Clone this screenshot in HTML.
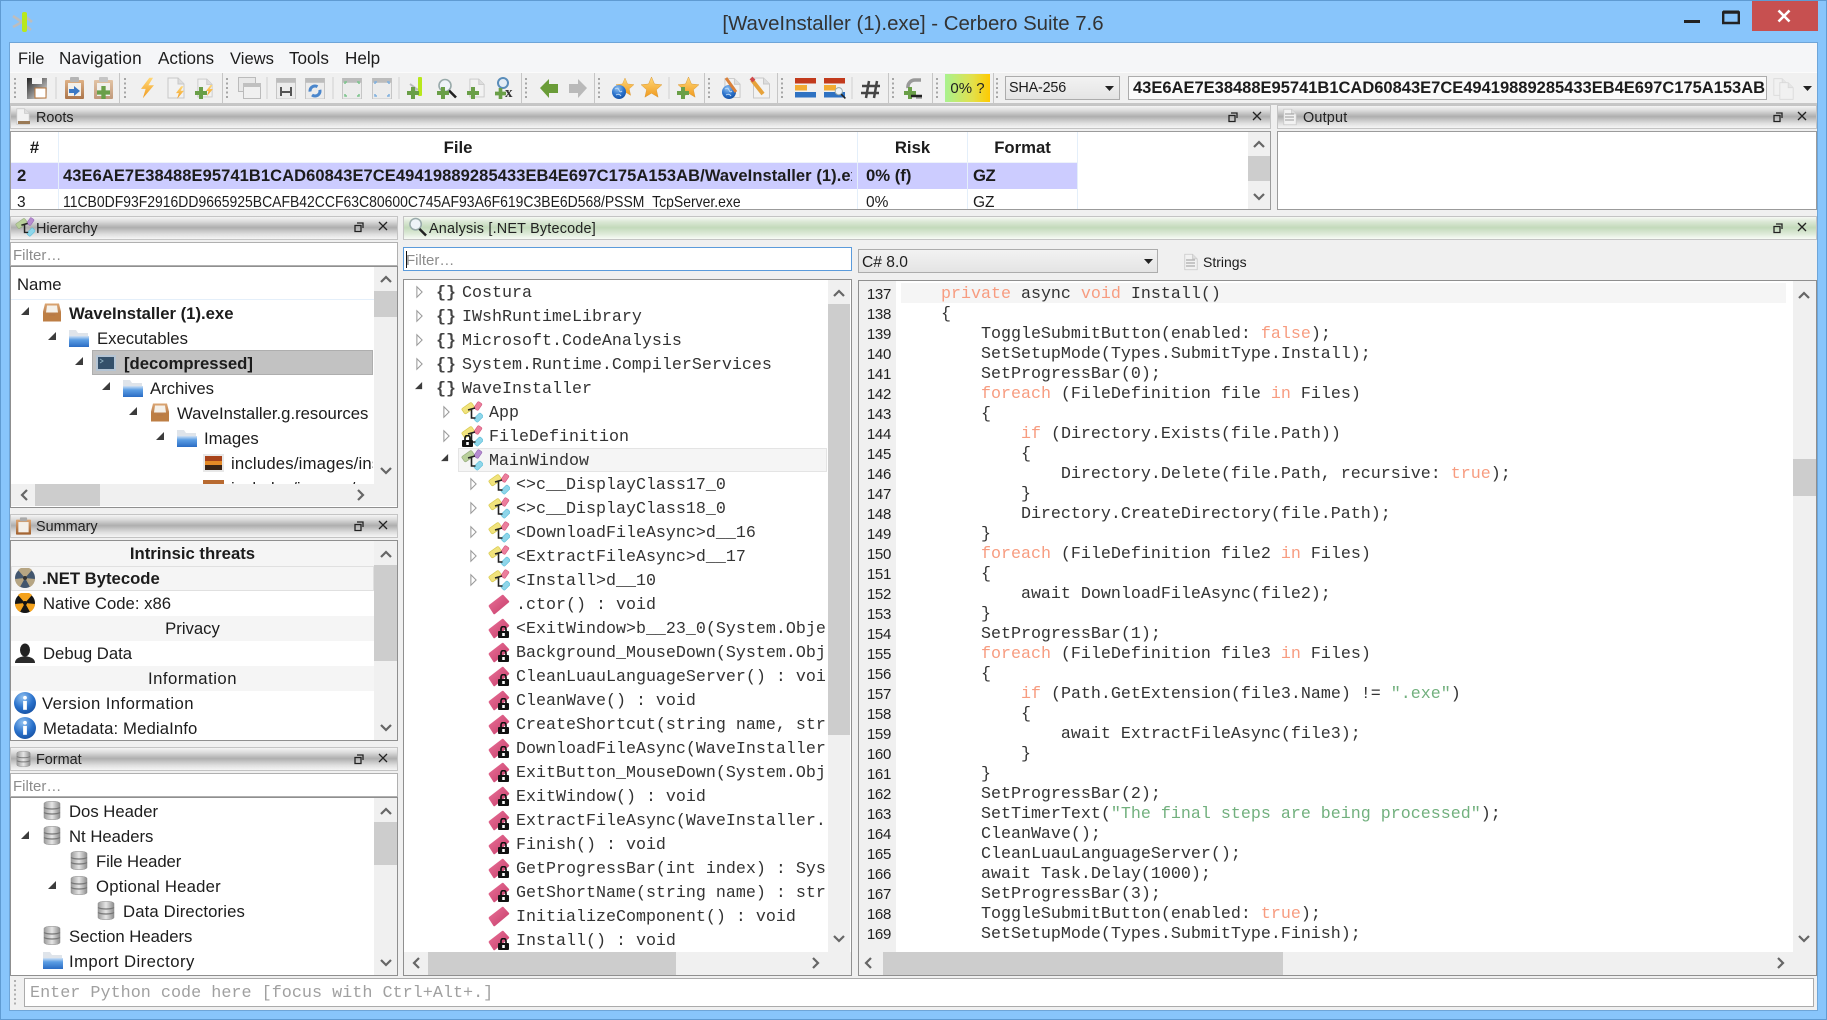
<!DOCTYPE html>
<html><head><meta charset="utf-8"><title>[WaveInstaller (1).exe] - Cerbero Suite 7.6</title>
<style>
html,body{margin:0;padding:0;background:#88c5fb}
#w{position:relative;width:1827px;height:1020px;overflow:hidden;background:#88c5fb;font-family:"Liberation Sans",sans-serif;font-size:16.7px;color:#1c1c1c;filter:blur(.3px)}
.a{position:absolute;box-sizing:border-box;white-space:nowrap}
.dk{position:absolute;box-sizing:border-box;height:24px;border:1px solid #c4c4c4;background:linear-gradient(#f4f4f4,#dcdcdc 20%,#aeaeae 48%,#dedede 78%,#f6f6f6);font-size:14.4px;line-height:24px;color:#222}
.gr{background:linear-gradient(#f6f9f4,#dbe8d5 22%,#c3dabb 48%,#dfebda 78%,#f8fbf6)}
.dk span{position:absolute;top:0}
.box{position:absolute;box-sizing:border-box;border:1px solid #9b9b9b;background:#fff}
.f{position:absolute;box-sizing:border-box;height:24px;border:1px solid #b0b0b0;background:#fff;color:#8c8c8c;font-size:15px;line-height:25px;padding-left:2px}
.sb{position:absolute;background:#f0f0f0}
.th{position:absolute;background:#cdcdcd}
.clip{position:absolute;overflow:hidden}
.r{height:25px;line-height:25px;white-space:nowrap}
.c{text-align:center;background:#f5f5f5}
.m{font-family:"Liberation Mono",monospace;font-size:16.67px;color:#333}
.m div{height:24px;line-height:24px;white-space:pre}
pre{margin:0;font:16.67px/20px "Liberation Mono",monospace;color:#333}
i{font-style:normal;color:#f79c80}
em{font-style:normal;color:#72b07e}
svg#o{position:absolute;left:0;top:0;pointer-events:none}
</style></head><body><div id="w">

<!-- window frame -->
<div class="a" style="left:0;top:0;width:1827px;height:1020px;border:1px solid #5f9bd2"></div>
<div class="a" style="left:9px;top:42px;width:1809px;height:969px;background:#f0f0f0;border:1px solid #6ea5d8"></div>
<div class="a" style="left:1752px;top:1px;width:66px;height:30px;background:#c75050"></div>
<div class="a" style="left:613px;top:8px;width:600px;height:32px;line-height:32px;text-align:center;font-size:20.4px;color:#333">[WaveInstaller (1).exe] - Cerbero Suite 7.6</div>

<!-- menu bar -->
<div class="a" style="left:10px;top:43px;width:1807px;height:29px;background:#f5f6f8"></div>
<span class="a" style="left:18px;top:47px;line-height:24px;font-size:16.4px">File</span>
<span class="a" style="left:59px;top:47px;line-height:24px;font-size:17.1px;letter-spacing:.2px">Navigation</span>
<span class="a" style="left:158px;top:47px;line-height:24px;font-size:17.1px">Actions</span>
<span class="a" style="left:230px;top:47px;line-height:24px;font-size:16.6px">Views</span>
<span class="a" style="left:289px;top:47px;line-height:24px;font-size:17.1px">Tools</span>
<span class="a" style="left:345px;top:47px;line-height:24px;font-size:17.1px">Help</span>

<!-- toolbar -->
<div class="a" style="left:10px;top:72px;width:1807px;height:33px;background:#f0f0f0;border-top:1px solid #fbfbfb;border-bottom:2px solid #c6c6c6"></div>
<div class="a" style="left:945px;top:74px;width:45px;height:28px;background:linear-gradient(90deg,#a9f28f,#e3e04a 62%,#ffca00);line-height:30px;text-align:center;font-size:15px;color:#222">0% ?</div>
<div class="a" style="left:1005px;top:76px;width:115px;height:24px;border:1px solid #acacac;background:linear-gradient(#f2f2f2,#e4e4e4);font-size:14.4px;line-height:23px;padding-left:3px;letter-spacing:-.2px">SHA-256</div>
<div class="a" style="left:1128px;top:76px;width:639px;height:24px;border:1px solid #acacac;background:#fafafa;font-size:16.5px;font-weight:bold;line-height:23px;padding-left:4px;overflow:hidden">43E6AE7E38488E95741B1CAD60843E7CE49419889285433EB4E697C175A153AB</div>

<!-- Roots -->
<div class="dk" style="left:10px;top:105px;width:1261px"><span style="left:25px">Roots</span></div>
<div class="box" style="left:10px;top:131px;width:1261px;height:79px;overflow:hidden">
 <div class="a" style="left:0;top:31px;width:1066px;height:26px;background:#ccccff"></div>
 <div class="a" style="left:47px;top:0;width:1px;height:78px;background:#e4effa"></div>
 <div class="a" style="left:846px;top:0;width:1px;height:78px;background:#e4effa"></div>
 <div class="a" style="left:956px;top:0;width:1px;height:78px;background:#e4effa"></div>
 <div class="a" style="left:1066px;top:0;width:1px;height:78px;background:#e4effa"></div>
 <div class="a" style="left:0;top:30px;width:1066px;height:1px;background:#eef3fa"></div>
 <b class="a" style="left:0;top:2px;width:47px;text-align:center;line-height:28px">#</b>
 <b class="a" style="left:48px;top:2px;width:798px;text-align:center;line-height:28px">File</b>
 <b class="a" style="left:847px;top:2px;width:109px;text-align:center;line-height:28px">Risk</b>
 <b class="a" style="left:957px;top:2px;width:109px;text-align:center;line-height:28px">Format</b>
 <b class="a" style="left:6px;top:31px;line-height:26px">2</b>
 <div class="a" style="left:52px;top:31px;width:789px;height:26px;overflow:hidden;line-height:26px;font-size:16.5px;font-weight:bold;letter-spacing:.08px">43E6AE7E38488E95741B1CAD60843E7CE49419889285433EB4E697C175A153AB/WaveInstaller (1).exe</div>
 <b class="a" style="left:855px;top:31px;line-height:26px">0% (f)</b>
 <b class="a" style="left:962px;top:31px;line-height:26px;letter-spacing:-.5px">GZ</b>
 <span class="a" style="left:6px;top:59px;line-height:24px;font-size:15.5px">3</span>
 <span class="a" style="left:52px;top:59px;line-height:24px;font-size:16px;transform:scaleX(.872);transform-origin:0 0">11CB0DF93F2916DD9665925BCAFB42CCF63C80600C745AF93A6F619C3BE6D568/PSSM_TcpServer.exe</span>
 <span class="a" style="left:855px;top:59px;line-height:24px;font-size:15.5px">0%</span>
 <span class="a" style="left:962px;top:59px;line-height:24px;font-size:15.5px">GZ</span>
 <div class="sb" style="left:1237px;top:0;width:22px;height:77px"></div>
 <div class="th" style="left:1237px;top:24px;width:22px;height:25px"></div>
</div>

<!-- Output -->
<div class="dk" style="left:1277px;top:105px;width:540px"><span style="left:25px;letter-spacing:.2px">Output</span></div>
<div class="box" style="left:1277px;top:131px;width:540px;height:79px"></div>

<!-- Hierarchy -->
<div class="dk" style="left:10px;top:216px;width:388px"><span style="left:25px">Hierarchy</span></div>
<div class="f" style="left:10px;top:242px;width:388px">Filter…</div>
<div class="box" style="left:10px;top:266px;width:388px;height:242px;border-color:#8f8f8f"></div>
<span class="a" style="left:17px;top:268px;line-height:33px">Name</span>
<div class="a" style="left:11px;top:299px;width:363px;height:1px;background:#e4effa"></div>
<div class="a" style="left:92px;top:350px;width:281px;height:25px;background:#c2c2c2;border:1px solid #aeaeae"></div>
<div class="clip" style="left:11px;top:301px;width:362px;height:183px">
 <div class="r" style="padding-left:58px;font-weight:bold">WaveInstaller (1).exe</div>
 <div class="r" style="padding-left:86px">Executables</div>
 <div class="r" style="padding-left:113px;font-weight:bold">[decompressed]</div>
 <div class="r" style="padding-left:139px">Archives</div>
 <div class="r" style="padding-left:166px">WaveInstaller.g.resources</div>
 <div class="r" style="padding-left:193px">Images</div>
 <div class="r" style="padding-left:220px;letter-spacing:.2px">includes/images/installer.png</div>
 <div class="r" style="padding-left:220px">includes/images/mountain.png</div>
</div>
<div class="sb" style="left:374px;top:267px;width:23px;height:217px"></div>
<div class="th" style="left:374px;top:291px;width:23px;height:26px"></div>
<div class="sb" style="left:11px;top:484px;width:386px;height:22px"></div>
<div class="th" style="left:35px;top:484px;width:65px;height:22px"></div>

<!-- Summary -->
<div class="dk" style="left:10px;top:514px;width:388px"><span style="left:25px">Summary</span></div>
<div class="box" style="left:10px;top:540px;width:388px;height:201px;border-color:#8f8f8f"></div>
<div class="clip" style="left:11px;top:541px;width:363px;height:199px">
 <div class="r c"><b>Intrinsic threats</b></div>
 <div class="r" style="padding-left:31px;font-weight:bold;background:#f5f5f5;box-shadow:inset 0 0 0 1px #e0e0e0">.NET Bytecode</div>
 <div class="r" style="padding-left:32px">Native Code: x86</div>
 <div class="r c">Privacy</div>
 <div class="r" style="padding-left:32px;line-height:26px">Debug Data</div>
 <div class="r c" style="letter-spacing:.5px">Information</div>
 <div class="r" style="padding-left:31px;letter-spacing:.43px">Version Information</div>
 <div class="r" style="padding-left:32px;letter-spacing:.12px;line-height:26px">Metadata: MediaInfo</div>
</div>
<div class="sb" style="left:374px;top:541px;width:23px;height:199px"></div>
<div class="th" style="left:374px;top:565px;width:23px;height:96px"></div>

<!-- Format -->
<div class="dk" style="left:10px;top:747px;width:388px"><span style="left:25px">Format</span></div>
<div class="f" style="left:10px;top:773px;width:388px">Filter…</div>
<div class="box" style="left:10px;top:797px;width:388px;height:179px;border-color:#8f8f8f"></div>
<div class="clip" style="left:11px;top:799px;width:363px;height:176px">
 <div class="r" style="padding-left:58px">Dos Header</div>
 <div class="r" style="padding-left:58px">Nt Headers</div>
 <div class="r" style="padding-left:85px;letter-spacing:-.1px">File Header</div>
 <div class="r" style="padding-left:85px;letter-spacing:.23px">Optional Header</div>
 <div class="r" style="padding-left:112px;letter-spacing:.15px">Data Directories</div>
 <div class="r" style="padding-left:58px">Section Headers</div>
 <div class="r" style="padding-left:58px;letter-spacing:.44px">Import Directory</div>
</div>
<div class="sb" style="left:374px;top:798px;width:23px;height:177px"></div>
<div class="th" style="left:374px;top:822px;width:23px;height:43px"></div>

<!-- Analysis -->
<div class="dk gr" style="left:403px;top:216px;width:1414px"><span style="left:25px;letter-spacing:.2px">Analysis [.NET Bytecode]</span></div>
<div class="f" style="left:403px;top:247px;width:449px;border-color:#5b9bdb">Filter…</div>
<div class="a" style="left:406px;top:251px;width:1px;height:17px;background:#111"></div>
<div class="a" style="left:858px;top:249px;width:300px;height:24px;border:1px solid #acacac;background:linear-gradient(#f2f2f2,#e4e4e4);font-size:15.6px;line-height:25px;padding-left:3px">C# 8.0</div>
<span class="a" style="left:1203px;top:250px;line-height:24px;font-size:14px">Strings</span>

<!-- namespace tree -->
<div class="box" style="left:403px;top:279px;width:449px;height:697px;border-color:#8f8f8f"></div>
<div class="a" style="left:458px;top:448px;width:369px;height:24px;background:#f5f5f5;border:1px solid #e4e4e4"></div>
<div class="clip m" style="left:404px;top:282px;width:422px;height:670px;color:#444">
 <div style="padding-left:32px"><b>{}</b></div><div style="padding-left:32px"><b>{}</b></div><div style="padding-left:32px"><b>{}</b></div><div style="padding-left:32px"><b>{}</b></div><div style="padding-left:32px"><b>{}</b></div>
</div>
<div class="clip m" style="left:404px;top:282px;width:422px;height:670px">
 <div style="padding-left:58px">Costura</div>
 <div style="padding-left:58px">IWshRuntimeLibrary</div>
 <div style="padding-left:58px">Microsoft.CodeAnalysis</div>
 <div style="padding-left:58px">System.Runtime.CompilerServices</div>
 <div style="padding-left:58px">WaveInstaller</div>
 <div style="padding-left:85px">App</div>
 <div style="padding-left:85px">FileDefinition</div>
 <div style="padding-left:85px">MainWindow</div>
 <div style="padding-left:112px">&lt;&gt;c__DisplayClass17_0</div>
 <div style="padding-left:112px">&lt;&gt;c__DisplayClass18_0</div>
 <div style="padding-left:112px">&lt;DownloadFileAsync&gt;d__16</div>
 <div style="padding-left:112px">&lt;ExtractFileAsync&gt;d__17</div>
 <div style="padding-left:112px">&lt;Install&gt;d__10</div>
 <div style="padding-left:112px">.ctor() : void</div>
 <div style="padding-left:112px">&lt;ExitWindow&gt;b__23_0(System.Object sender)</div>
 <div style="padding-left:112px">Background_MouseDown(System.Object sender)</div>
 <div style="padding-left:112px">CleanLuauLanguageServer() : void</div>
 <div style="padding-left:112px">CleanWave() : void</div>
 <div style="padding-left:112px">CreateShortcut(string name, string path)</div>
 <div style="padding-left:112px">DownloadFileAsync(WaveInstaller.FileDefinition)</div>
 <div style="padding-left:112px">ExitButton_MouseDown(System.Object sender)</div>
 <div style="padding-left:112px">ExitWindow() : void</div>
 <div style="padding-left:112px">ExtractFileAsync(WaveInstaller.FileDefinition)</div>
 <div style="padding-left:112px">Finish() : void</div>
 <div style="padding-left:112px">GetProgressBar(int index) : System</div>
 <div style="padding-left:112px">GetShortName(string name) : string</div>
 <div style="padding-left:112px">InitializeComponent() : void</div>
 <div style="padding-left:112px">Install() : void</div>
</div>
<div class="sb" style="left:828px;top:280px;width:22px;height:672px"></div>
<div class="th" style="left:828px;top:304px;width:22px;height:431px"></div>
<div class="sb" style="left:404px;top:952px;width:447px;height:23px"></div>
<div class="th" style="left:428px;top:952px;width:248px;height:23px"></div>

<!-- code -->
<div class="box" style="left:858px;top:280px;width:959px;height:696px;border-color:#8f8f8f"></div>
<div class="a" style="left:859px;top:281px;width:37px;height:671px;background:#f0f0f0"></div>
<div class="a" style="left:901px;top:283px;width:885px;height:20px;background:#f5f5f5"></div>
<div class="clip" style="left:859px;top:285px;width:32px;height:667px;text-align:right;font-size:15px;line-height:20px;letter-spacing:-.3px;color:#222">137<br>138<br>139<br>140<br>141<br>142<br>143<br>144<br>145<br>146<br>147<br>148<br>149<br>150<br>151<br>152<br>153<br>154<br>155<br>156<br>157<br>158<br>159<br>160<br>161<br>162<br>163<br>164<br>165<br>166<br>167<br>168<br>169</div>
<div class="clip" style="left:901px;top:285px;width:890px;height:667px"><pre>    <i>private</i> async <i>void</i> Install()
    {
        ToggleSubmitButton(enabled: <i>false</i>);
        SetSetupMode(Types.SubmitType.Install);
        SetProgressBar(0);
        <i>foreach</i> (FileDefinition file <i>in</i> Files)
        {
            <i>if</i> (Directory.Exists(file.Path))
            {
                Directory.Delete(file.Path, recursive: <i>true</i>);
            }
            Directory.CreateDirectory(file.Path);
        }
        <i>foreach</i> (FileDefinition file2 <i>in</i> Files)
        {
            await DownloadFileAsync(file2);
        }
        SetProgressBar(1);
        <i>foreach</i> (FileDefinition file3 <i>in</i> Files)
        {
            <i>if</i> (Path.GetExtension(file3.Name) != <em>".exe"</em>)
            {
                await ExtractFileAsync(file3);
            }
        }
        SetProgressBar(2);
        SetTimerText(<em>"The final steps are being processed"</em>);
        CleanWave();
        CleanLuauLanguageServer();
        await Task.Delay(1000);
        SetProgressBar(3);
        ToggleSubmitButton(enabled: <i>true</i>);
        SetSetupMode(Types.SubmitType.Finish);</pre></div>
<div class="sb" style="left:1793px;top:281px;width:23px;height:671px"></div>
<div class="th" style="left:1793px;top:459px;width:23px;height:37px"></div>
<div class="sb" style="left:859px;top:952px;width:957px;height:23px"></div>
<div class="th" style="left:883px;top:952px;width:400px;height:23px"></div>

<!-- python input -->
<div class="a" style="left:24px;top:978px;width:1790px;height:29px;border:1px solid #ababab;background:#fff;font:16.8px/29px 'Liberation Mono',monospace;color:#a0a0a0;padding-left:5px">Enter Python code here [focus with Ctrl+Alt+.]</div>

<svg id="o" width="1827" height="1020" viewBox="0 0 1827 1020" xmlns="http://www.w3.org/2000/svg">
<defs>
<linearGradient id="gb" x1="0" y1="0" x2="0" y2="1"><stop offset="0" stop-color="#cfe0f4"/><stop offset=".35" stop-color="#5d9fe4"/><stop offset="1" stop-color="#2a6cc4"/></linearGradient>
<linearGradient id="go" x1="0" y1="0" x2="0" y2="1"><stop offset="0" stop-color="#dca673"/><stop offset="1" stop-color="#a0602e"/></linearGradient>
<linearGradient id="gp" x1="0" y1="0" x2="1" y2="1"><stop offset="0" stop-color="#ea7298"/><stop offset="1" stop-color="#c53c6a"/></linearGradient>
<linearGradient id="gd" x1="0" y1="0" x2="1" y2="0"><stop offset="0" stop-color="#9a9a9a"/><stop offset=".5" stop-color="#e6e6e6"/><stop offset="1" stop-color="#8c8c8c"/></linearGradient>
<linearGradient id="gs" x1="0" y1="0" x2="0" y2="1"><stop offset="0" stop-color="#ffd877"/><stop offset="1" stop-color="#f09a1e"/></linearGradient>
<radialGradient id="gi" cx=".4" cy=".25" r=".85"><stop offset="0" stop-color="#8fc0f0"/><stop offset=".55" stop-color="#2a72cc"/><stop offset="1" stop-color="#124a9a"/></radialGradient>
<linearGradient id="gf" x1="0" y1="0" x2="1" y2="1"><stop offset="0" stop-color="#222"/><stop offset="1" stop-color="#f0f0f0"/></linearGradient>

<symbol id="tf" viewBox="0 0 9 9"><path d="M8 0V8H0Z" fill="#3c3c3c"/></symbol>
<symbol id="to" viewBox="0 0 8 14"><path d="M1 1L7 7L1 13Z" fill="#fff" stroke="#9a9a9a" stroke-width="1.2"/></symbol>
<symbol id="tray" viewBox="0 0 20 20"><path d="M3 1h14l2 8v10H1V9z" fill="url(#go)"/><path d="M5 3h10l1 7H4z" fill="#f5f1ea"/><path d="M1 10h5l1 3h6l1-3h5v9H1z" fill="#bd7e44"/></symbol>
<symbol id="fold" viewBox="0 0 21 20"><path d="M1 2h7l2 3h10v14H1z" fill="#dfe4ea"/><path d="M1 8h20v11H1z" fill="url(#gb)"/></symbol>
<symbol id="term" viewBox="0 0 20 20"><rect x="0" y="2" width="20" height="16" fill="#b4c4d4"/><rect x="2" y="4" width="16" height="12" fill="#34506a"/><path d="M4 6l3 2-3 2" stroke="#8ab" fill="none"/></symbol>
<symbol id="img" viewBox="0 0 21 20"><rect y="1" width="21" height="18" fill="#e8e8e8"/><rect x="2" y="3" width="17" height="14" fill="#e58a26"/><rect x="2" y="3" width="17" height="5" fill="#a8431a"/><rect x="2" y="12" width="17" height="5" fill="#3a2416"/></symbol>
<symbol id="db" viewBox="0 0 18 20"><path d="M1 3c0-3 16-3 16 0v14c0 3-16 3-16 0z" fill="url(#gd)" stroke="#8c8c8c" stroke-width=".5"/><path d="M1 7c3 2 13 2 16 0M1 12c3 2 13 2 16 0" fill="none" stroke="#777" stroke-width="1.2"/></symbol>
<symbol id="nuke" viewBox="0 0 20 20"><circle cx="10" cy="10" r="10" fill="#161616"/><path d="M10 10L3 2a10 10 0 0 1 14 0zM10 10L0 11a10 10 0 0 0 5 8zM10 10L20 11a10 10 0 0 1-5 8z" fill="#f4a21c"/><circle cx="10" cy="10" r="2" fill="#111"/></symbol>
<symbol id="nukg" viewBox="0 0 20 20"><circle cx="10" cy="10" r="10" fill="#42566e"/><path d="M10 10L3 2a10 10 0 0 1 14 0zM10 10L0 11a10 10 0 0 0 5 8zM10 10L20 11a10 10 0 0 1-5 8z" fill="#b6a583"/><circle cx="10" cy="10" r="2" fill="#333"/></symbol>
<symbol id="user" viewBox="0 0 22 20"><ellipse cx="11" cy="7" rx="5" ry="6.5" fill="#222"/><path d="M1 20c0-5 5-6 10-7 5 1 10 2 10 7z" fill="#2a2a2a"/></symbol>
<symbol id="info" viewBox="0 0 21 21"><circle cx="10.5" cy="10.5" r="10.5" fill="url(#gi)"/><circle cx="10.5" cy="5.5" r="1.8" fill="#fff"/><rect x="8.7" y="8.5" width="3.6" height="8.5" fill="#fff"/></symbol>
<symbol id="lock" viewBox="0 0 11 12"><path d="M3 5V3a2.5 2.5 0 0 1 5 0v2" fill="none" stroke="#111" stroke-width="1.7"/><rect y="5" width="11" height="7" rx="1" fill="#111"/><rect x="4.2" y="7" width="2.6" height="3" fill="#fff"/></symbol>
<symbol id="cls" viewBox="0 0 22 22"><rect x="1" y="4" width="12" height="6.5" rx="1.5" transform="rotate(-35 7 7)" fill="#f1e37c" stroke="#d8c94f" stroke-width=".7" /><rect x="13" y="2.5" width="8" height="5" rx="1.3" transform="rotate(-55 17 5)" fill="#ec7f9d" stroke="#d4577c" stroke-width=".6"/><rect x="13" y="14" width="9" height="5.2" rx="1.3" transform="rotate(-45 17.5 16.5)" fill="#8ed6ea" stroke="#58bdd8" stroke-width=".6"/><path d="M7 9l7-2M10.5 8v9h4" stroke="#222" stroke-width="1.6" fill="none"/></symbol>
<symbol id="clm" viewBox="0 0 22 22"><rect x="1" y="4" width="12" height="6.5" rx="1.5" transform="rotate(-35 7 7)" fill="#b8cf9a" stroke="#98ad80" stroke-width=".7" /><rect x="13" y="2.5" width="8" height="5" rx="1.3" transform="rotate(-55 17 5)" fill="#b68cd0" stroke="#9366b5" stroke-width=".6"/><rect x="13" y="14" width="9" height="5.2" rx="1.3" transform="rotate(-45 17.5 16.5)" fill="#8ed6ea" stroke="#58bdd8" stroke-width=".6"/><path d="M7 9l7-2M10.5 8v9h4" stroke="#222" stroke-width="1.6" fill="none"/></symbol>
<symbol id="meth" viewBox="0 0 22 21"><path d="M1 11L14 1q1-.6 1.7.3L21 7q.5.8-.3 1.5L7 20q-.8.6-1.5 0L1 13q-.8-1 0-2z" fill="url(#gp)"/></symbol>
<symbol id="ml" viewBox="0 0 22 21"><use href="#meth" width="22" height="21"/><use href="#lock" x="10" y="8" width="11" height="12"/></symbol>
<symbol id="plus" viewBox="0 0 12 12"><path d="M4 0h4v4h4v4H8v4H4V8H0V4h4z" fill="#6a9f48"/></symbol>
<symbol id="doc" viewBox="0 0 18 22"><path d="M1 1h10l6 6v14H1z" fill="#f2f2f2" stroke="#c8c8c8"/><path d="M11 1v6h6" fill="#ddd" stroke="#c8c8c8"/></symbol>
<symbol id="bolt" viewBox="0 0 14 22"><path d="M9 0L0 12h5L2 22 14 8H8L13 0z" fill="url(#gs)"/></symbol>
<symbol id="clip" viewBox="0 0 19 22"><rect y="3" width="19" height="19" rx="1" fill="url(#go)"/><rect x="3" y="6" width="13" height="13" fill="#f4f0ea"/><rect x="5" y="0" width="9" height="5" rx="1" fill="#aaa"/></symbol>
<symbol id="star" viewBox="0 0 21 21"><path d="M10.5 0l3 7 7.5.7-5.6 5 1.7 7.5-6.6-4-6.600 4 1.700-7.500L0 7.700 7.500 7z" fill="url(#gs)" stroke="#d99a3a" stroke-width=".5"/></symbol>
<symbol id="globe" viewBox="0 0 14 14"><circle cx="7" cy="7" r="7" fill="url(#gi)"/><path d="M3 4q3-2 4 1t3 1M4 10q3-2 5 1" stroke="#bcd9f5" fill="none"/></symbol>
<symbol id="mag" viewBox="0 0 20 20"><circle cx="8" cy="7" r="6" fill="#eef3f8" stroke="#9aa" stroke-width="1.6"/><path d="M12 12l7 7" stroke="#222" stroke-width="2.6"/></symbol>
<symbol id="bars" viewBox="0 0 21 20"><rect width="21" height="5.500" fill="#c23a1c"/><rect y="7" width="12" height="5.500" fill="#f2ab33"/><rect y="14" width="21" height="5.500" fill="#2f72c2"/></symbol>
<symbol id="win" viewBox="0 0 20 22"><rect width="20" height="22" fill="#ececec" stroke="#c4c4c4"/><rect width="20" height="5" fill="#bcbcbc"/></symbol>
</defs>

<!-- app icon -->
<path d="M13 16l9 6M13 27l9-5M26 17l6 5M26 26l5 4" stroke="#bdbdbd" stroke-width="2.600" fill="none"/>
<rect x="22" y="12" width="5" height="20" rx="2" fill="#b8e81c"/>
<!-- window buttons -->
<rect x="1684" y="20" width="16" height="3" fill="#222"/>
<path d="M1723.200 12.500H1738.800V23H1723.200Z" fill="none" stroke="#222" stroke-width="2.400"/>
<path d="M1723 12h16" stroke="#222" stroke-width="3"/>
<path d="M1778.500 10.500l11 11M1789.500 10.500l-11 11" stroke="#fff" stroke-width="2.600"/>

<!-- toolbar grips and separators -->
<path d="M15 78V99M125 78V99M227 78V99M526 78V99M599 78V99M709 78V99M782 78V99M893 78V99M937 78V99M997 78V99" stroke="#a6a6a6" stroke-width="2" stroke-dasharray="2 2.500"/>
<path d="M56 77V99M267 77V99M333 77V99M399 77V99M669 77V99M852 77V99" stroke="#cfcfcf"/>
<path d="M119.500 73V104M222.500 73V104M521.500 73V104M594.500 73V104M704.500 73V104M777.500 73V104M888.500 73V104M932.500 73V104M993.500 73V104" stroke="#c6c6c6"/>

<!-- toolbar icons -->
<rect x="27" y="78" width="20" height="21" fill="url(#gf)"/><rect x="32" y="78" width="10" height="6" fill="#f5f5f5"/><rect x="35" y="88" width="11" height="10" fill="#fff" stroke="#b8763a"/>
<g opacity=".85"><use href="#clip" x="65" y="77" width="19" height="22"/></g><path d="M69 89h5v-3l6 5-6 5v-3h-5z" fill="#3b78c4"/>
<g opacity=".6"><use href="#clip" x="94" y="77" width="19" height="22"/></g><use href="#plus" x="97" y="86" width="13" height="13"/>
<use href="#bolt" x="141" y="77" width="13" height="22"/>
<use href="#doc" x="167" y="77" width="18" height="22"/><use href="#bolt" x="176" y="86" width="8" height="13"/>
<use href="#doc" x="197" y="77" width="16" height="22"/><use href="#plus" x="195" y="87" width="12" height="12"/><use href="#bolt" x="206" y="85" width="7" height="11"/>
<rect x="238.500" y="77.500" width="17" height="14" fill="#e8e8e8" stroke="#bbb"/><rect x="243.500" y="83.500" width="17" height="15" fill="#f0f0f0" stroke="#bbb"/><rect x="243" y="83" width="18" height="4" fill="#c0c0c0"/>
<use href="#win" x="276" y="78" width="20" height="21"/><path d="M281 96V87M291 96V87M281 92h10" stroke="#555" stroke-width="2" fill="none"/>
<use href="#win" x="305" y="78" width="20" height="21"/><circle cx="315" cy="91" r="5" fill="none" stroke="#4a86cc" stroke-width="3" stroke-dasharray="11 4"/>
<use href="#win" x="342" y="78" width="20" height="21"/><path d="M345 84v-2h2M359 84v-2h-2M345 94v2h2M359 94v2h-2" stroke="#7cc48c" stroke-width="1.500" fill="none"/>
<use href="#win" x="372" y="78" width="20" height="21"/><path d="M375 84v-2h2M389 84v-2h-2M375 94v2h2M389 94v2h-2" stroke="#7fb0de" stroke-width="1.500" fill="none"/>
<path d="M410 84l8 6M410 92l8-3" stroke="#bbb" stroke-width="2" fill="none"/><rect x="418" y="77" width="4" height="19" rx="1" fill="#b8e81c"/><use href="#plus" x="407" y="87" width="12" height="12"/>
<use href="#mag" x="437" y="78" width="20" height="21"/><use href="#plus" x="437" y="87" width="12" height="12"/>
<use href="#doc" x="469" y="77" width="16" height="22"/><use href="#plus" x="467" y="87" width="12" height="12"/>
<circle cx="503" cy="83" r="5" fill="#e4edf5" stroke="#5a8dba" stroke-width="2"/><use href="#plus" x="495" y="88" width="11" height="11"/>
<text x="505" y="97" font-family="Liberation Serif,serif" font-weight="bold" font-size="15" fill="#333">x</text>
<path d="M540 88l9-9v5h9v9h-9v5z" fill="#6a9c38"/><path d="M587 88l-9-9v5h-9v9h9v5z" fill="#b9b9b9"/>
<use href="#star" x="616" y="77" width="18" height="20"/><use href="#globe" x="612" y="85" width="14" height="14"/>
<use href="#star" x="641" y="77" width="21" height="21"/>
<use href="#star" x="678" y="77" width="21" height="21"/><use href="#plus" x="677" y="87" width="12" height="12"/>
<use href="#doc" x="724" y="77" width="17" height="22"/><use href="#globe" x="722" y="85" width="14" height="14"/><path d="M726 78l10 14" stroke="#d9813a" stroke-width="3"/>
<use href="#doc" x="752" y="77" width="19" height="22"/><path d="M752 80l11 14" stroke="#e6a23a" stroke-width="4"/><path d="M751 78l3 3" stroke="#d04a4a" stroke-width="4"/>
<use href="#bars" x="795" y="78" width="21" height="20"/>
<use href="#bars" x="824" y="78" width="21" height="20"/><use href="#mag" x="834" y="87" width="12" height="12"/>
<path d="M869 81l-3 17M877 81l-3 17M862 86h18M861 93h18" stroke="#444" stroke-width="2.500" fill="none"/>
<path d="M921 80h-6a7 7 0 0 0-7 8M922 97h-6" stroke="#999" stroke-width="3.500" fill="none"/><use href="#plus" x="904" y="87" width="12" height="12"/><path d="M911 96h11" stroke="#222" stroke-width="2.500"/>
<g opacity=".55"><use href="#doc" x="1773" y="77" width="15" height="20"/><use href="#doc" x="1779" y="81" width="15" height="20"/></g>
<path d="M1803 86h9l-4.500 5z" fill="#222"/>
<path d="M1105 86h9l-4.500 5z" fill="#222"/>
<path d="M1144 259h9l-4.500 5z" fill="#222"/>

<!-- dock title icons -->
<use href="#doc" x="16" y="108" width="14" height="17"/><rect x="18" y="121" width="12" height="3" fill="#9a7a56"/>
<use href="#doc" x="1283" y="108" width="14" height="18"/><path d="M1285 114h9M1285 117h9M1285 120h9" stroke="#999"/>
<use href="#clm" x="15" y="217" width="20" height="20"/>
<use href="#mag" x="408" y="217" width="19" height="20"/>
<use href="#clip" x="16" y="517" width="15" height="18"/>
<use href="#db" x="16" y="750" width="15" height="18"/>
<use href="#doc" x="1184" y="253" width="14" height="18"/><path d="M1186 260h9M1186 263h9M1186 266h9" stroke="#999"/>

<!-- dock float/close -->
<g fill="none" stroke="#222" stroke-width="1.300">
<path d="M1231 113h6v5M1229 115.500h6v6h-6z"/><path d="M1253 112l8 8M1261 112l-8 8"/>
<path d="M1776 113h6v5M1774 115.500h6v6h-6z"/><path d="M1798 112l8 8M1806 112l-8 8"/>
<path d="M1776 224h6v5M1774 226.500h6v6h-6z"/><path d="M1798 223l8 8M1806 223l-8 8"/>
<path d="M357 223h6v5M355 225.500h6v6h-6z"/><path d="M379 222l8 8M387 222l-8 8"/>
<path d="M357 522h6v5M355 524.500h6v6h-6z"/><path d="M379 521l8 8M387 521l-8 8"/>
<path d="M357 755h6v5M355 757.500h6v6h-6z"/><path d="M379 754l8 8M387 754l-8 8"/>
</g>

<!-- scroll arrows -->
<g fill="none" stroke="#666" stroke-width="2.200">
<path d="M1254 147l5-5 5 5M1254 194l5 5 5-5"/>
<path d="M381 282l5-5 5 5M381 468l5 5 5-5M27 490l-5 5 5 5M358 490l5 5-5 5"/>
<path d="M381 557l5-5 5 5M381 725l5 5 5-5"/>
<path d="M381 814l5-5 5 5M381 960l5 5 5-5"/>
<path d="M834 296l5-5 5 5M834 936l5 5 5-5M419 958l-5 5 5 5M813 958l5 5-5 5"/>
<path d="M1799 298l5-5 5 5M1799 936l5 5 5-5M871 958l-5 5 5 5M1778 958l5 5-5 5"/>
</g>

<!-- hierarchy icons -->
<use href="#tf" x="21" y="307" width="9" height="9"/><use href="#tf" x="48" y="332" width="9" height="9"/><use href="#tf" x="75" y="357" width="9" height="9"/><use href="#tf" x="102" y="382" width="9" height="9"/><use href="#tf" x="129" y="407" width="9" height="9"/><use href="#tf" x="156" y="432" width="9" height="9"/>
<use href="#tray" x="42" y="302" width="20" height="21"/>
<use href="#fold" x="68" y="328" width="21" height="20"/>
<use href="#term" x="96" y="353" width="20" height="20"/>
<use href="#fold" x="122" y="378" width="21" height="20"/>
<use href="#tray" x="150" y="402" width="20" height="21"/>
<use href="#fold" x="176" y="428" width="21" height="20"/>
<use href="#img" x="203" y="453" width="21" height="20"/>
<rect x="203" y="480" width="21" height="4" fill="#b86a30"/>

<!-- summary icons -->
<use href="#nukg" x="15" y="568" width="20" height="20"/>
<use href="#nuke" x="15" y="593" width="20" height="20"/>
<use href="#user" x="14" y="643" width="22" height="20"/>
<use href="#info" x="14" y="692" width="22" height="22"/>
<use href="#info" x="14" y="717" width="22" height="22"/>

<!-- format icons -->
<use href="#tf" x="21" y="831" width="9" height="9"/><use href="#tf" x="48" y="881" width="9" height="9"/>
<use href="#db" x="43" y="800" width="18" height="21"/><use href="#db" x="43" y="825" width="18" height="21"/><use href="#db" x="70" y="850" width="18" height="21"/><use href="#db" x="70" y="875" width="18" height="21"/><use href="#db" x="97" y="900" width="18" height="21"/><use href="#db" x="43" y="925" width="18" height="21"/>
<use href="#fold" x="42" y="950" width="21" height="20"/>

<!-- analysis tree icons -->
<use href="#to" x="416" y="285" width="7" height="14"/><use href="#to" x="416" y="309" width="7" height="14"/><use href="#to" x="416" y="333" width="7" height="14"/><use href="#to" x="416" y="357" width="7" height="14"/>
<use href="#tf" x="415" y="382" width="8" height="8"/>
<use href="#to" x="443" y="405" width="7" height="14"/><use href="#to" x="443" y="429" width="7" height="14"/>
<use href="#tf" x="441" y="454" width="8" height="8"/>
<use href="#to" x="470" y="477" width="7" height="14"/><use href="#to" x="470" y="501" width="7" height="14"/><use href="#to" x="470" y="525" width="7" height="14"/><use href="#to" x="470" y="549" width="7" height="14"/><use href="#to" x="470" y="573" width="7" height="14"/>
<use href="#cls" x="461" y="401" width="22" height="22"/>
<use href="#cls" x="461" y="425" width="22" height="22"/><use href="#lock" x="462" y="435" width="11" height="12"/>
<use href="#clm" x="461" y="449" width="22" height="22"/>
<use href="#cls" x="488" y="473" width="22" height="22"/><use href="#cls" x="488" y="497" width="22" height="22"/><use href="#cls" x="488" y="521" width="22" height="22"/><use href="#cls" x="488" y="545" width="22" height="22"/><use href="#cls" x="488" y="569" width="22" height="22"/>
<use href="#meth" x="488" y="594" width="22" height="21"/>
<use href="#ml" x="488" y="618" width="22" height="21"/><use href="#ml" x="488" y="642" width="22" height="21"/><use href="#ml" x="488" y="666" width="22" height="21"/><use href="#ml" x="488" y="690" width="22" height="21"/><use href="#ml" x="488" y="714" width="22" height="21"/><use href="#ml" x="488" y="738" width="22" height="21"/><use href="#ml" x="488" y="762" width="22" height="21"/><use href="#ml" x="488" y="786" width="22" height="21"/><use href="#ml" x="488" y="810" width="22" height="21"/><use href="#ml" x="488" y="834" width="22" height="21"/><use href="#ml" x="488" y="858" width="22" height="21"/><use href="#ml" x="488" y="882" width="22" height="21"/>
<use href="#meth" x="488" y="906" width="22" height="21"/>
<use href="#ml" x="488" y="930" width="22" height="21"/>

<!-- python grip -->
<path d="M15 980V1006" stroke="#b0b0b0" stroke-width="2" stroke-dasharray="2 2.500"/>
</svg>
</div></body></html>
